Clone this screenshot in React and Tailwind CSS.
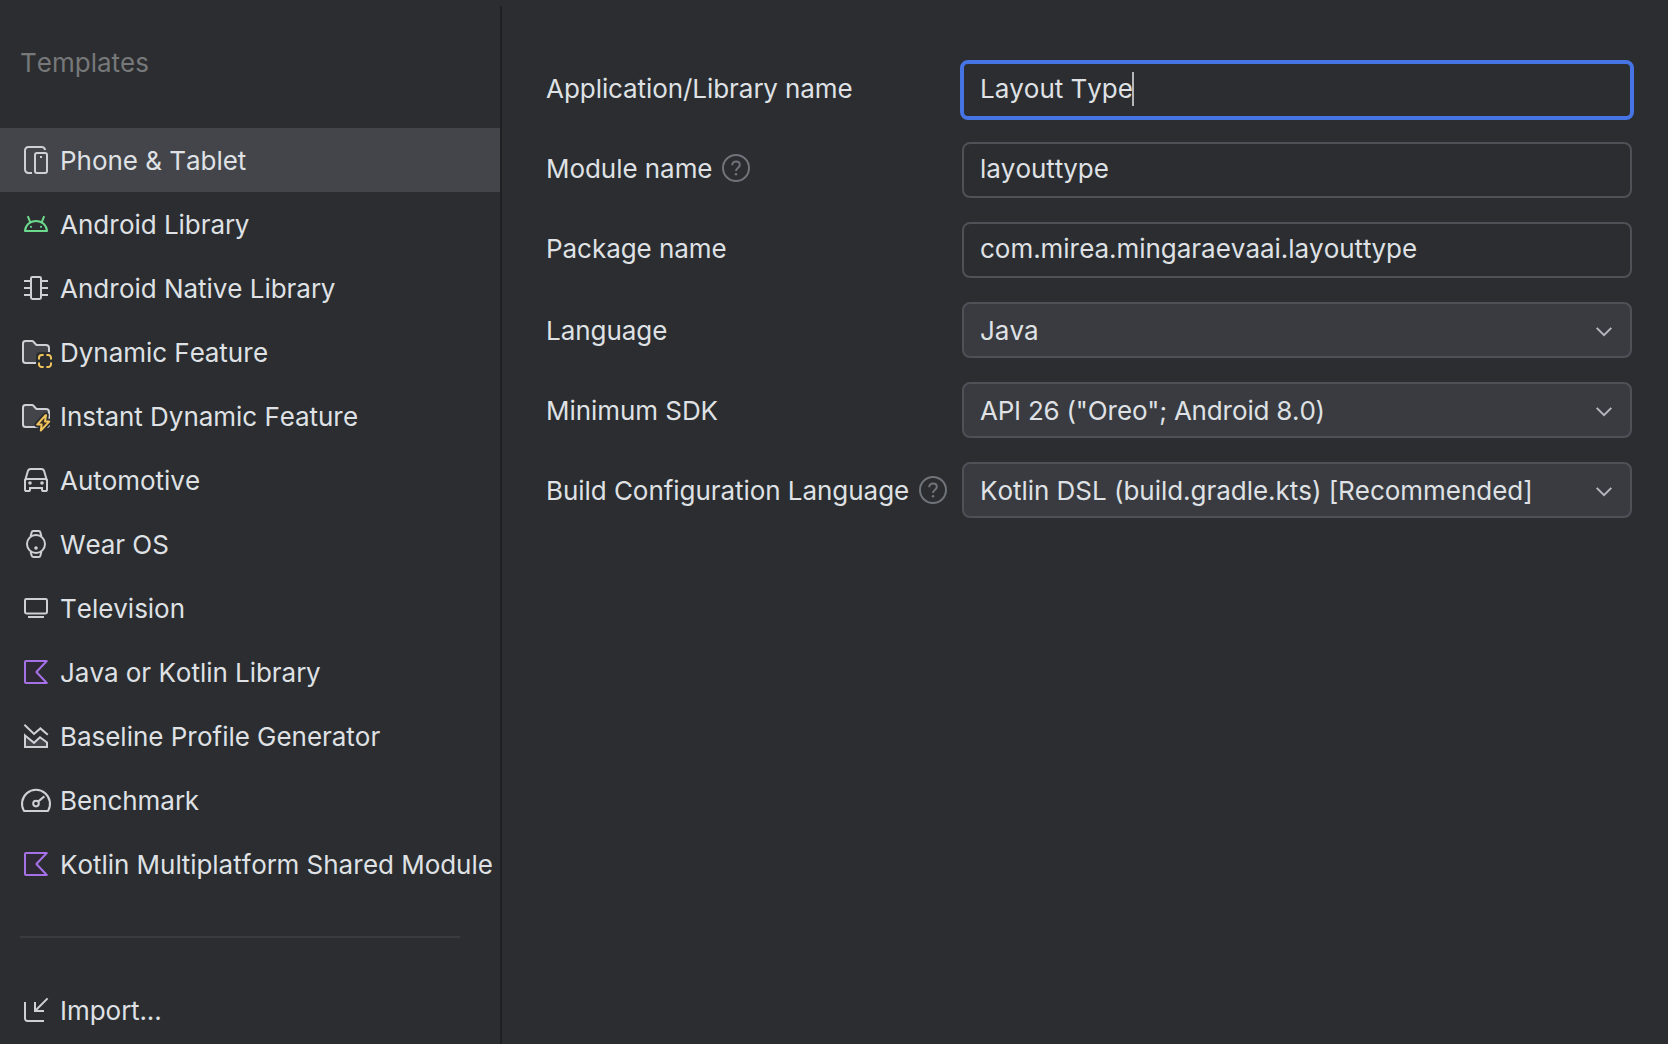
const S = { fill: "none", stroke: "#CED0D6", strokeWidth: 1 };

function Icon({ children }) {
  return (
    <svg viewBox="0 0 16 16" className="size-8 shrink-0 overflow-visible">
      {children}
    </svg>
  );
}

const FOLDER =
  "M8.106 4.346L8.253 4.5H13C13.828 4.5 14.5 5.172 14.5 6V12.133C14.5 12.953 13.932 13.5 13.367 13.5H2.633C2.068 13.5 1.5 12.953 1.5 12.133V3.867C1.5 3.047 2.068 2.5 2.633 2.5H6.122C6.258 2.5 6.388 2.556 6.483 2.654Z";
const BOLT = "M12.8 7.6L8.6 12.3H10.8L10.4 15.3L14.6 10.8H12.5L13 7.6Z";

const PhoneIcon = () => (
  <Icon>
    <path {...S} d="M6 14.5H4.2A1.7 1.7 0 0 1 2.5 12.8V3.2A1.7 1.7 0 0 1 4.2 1.5H10.8A1.9 1.9 0 0 1 12.6 3" />
    <rect {...S} x="7.5" y="4.5" width="6" height="10" rx="1" />
    <rect x="10" y="6" width="1" height="1" fill="#CED0D6" />
  </Icon>
);

const AndroidIcon = () => (
  <Icon>
    <g fill="none" stroke="#6CD98B">
      <path d="M2.5 11.5C2.7 8.6 5 6.5 8 6.5S13.3 8.6 13.5 11.5Z" strokeLinejoin="round" />
      <path d="M3.9 4.1L5.1 7.1M12.1 4.1L10.9 7.1" />
    </g>
    <circle cx="5.5" cy="9.4" r=".55" fill="#6CD98B" />
    <circle cx="10.5" cy="9.4" r=".55" fill="#6CD98B" />
  </Icon>
);

const ChipIcon = () => (
  <Icon>
    <rect {...S} x="5.5" y="2.5" width="5" height="11" rx=".7" />
    <path {...S} d="M2 4.5H5.5M2 8H5.5M2 11.5H5.5M10.5 4.5H14M10.5 8H14M10.5 11.5H14" />
  </Icon>
);

const DynamicIcon = () => (
  <Icon>
    <path d={FOLDER} fill="#43454A" stroke="#CED0D6" />
    <rect x="8" y="8" width="8.5" height="8.5" rx="2" fill="#2B2D30" />
    <path
      d="M9.5 11.8V10.9A1.4 1.4 0 0 1 10.9 9.5H11.8M13.2 9.5H14.1A1.4 1.4 0 0 1 15.5 10.9V11.8M15.5 13.2V14.1A1.4 1.4 0 0 1 14.1 15.5H13.2M11.8 15.5H10.9A1.4 1.4 0 0 1 9.5 14.1V13.2"
      fill="none"
      stroke="#F2C55C"
    />
  </Icon>
);

const InstantIcon = () => (
  <Icon>
    <path d={FOLDER} fill="#43454A" stroke="#CED0D6" />
    <path d={BOLT} fill="#2B2D30" stroke="#2B2D30" strokeWidth="2.8" strokeLinejoin="round" />
    <path d={BOLT} fill="#3D3223" stroke="#F2C55C" strokeLinejoin="round" />
  </Icon>
);

const CarIcon = () => (
  <Icon>
    <g {...S}>
      <path d="M2.5 8.5L3.9 3.6A1.5 1.5 0 0 1 5.3 2.5H10.7A1.5 1.5 0 0 1 12.1 3.6L13.5 8.5" />
      <path d="M3.3 7.5H12.7A.8 .8 0 0 1 13.5 8.3V12.7A.8 .8 0 0 1 12.7 13.5H11.8A.8 .8 0 0 1 11 12.7V12H5V12.7A.8 .8 0 0 1 4.2 13.5H3.3A.8 .8 0 0 1 2.5 12.7V8.3A.8 .8 0 0 1 3.3 7.5Z" />
    </g>
    <circle cx="5" cy="9.5" r=".9" fill="#CED0D6" />
    <circle cx="11" cy="9.5" r=".9" fill="#CED0D6" />
  </Icon>
);

const WatchIcon = () => (
  <Icon>
    <circle {...S} cx="8" cy="8" r="4.5" />
    <path {...S} d="M5.3 4.2L5.8 2.2A.9 .9 0 0 1 6.7 1.5H9.3A.9 .9 0 0 1 10.2 2.2L10.7 4.2M5.3 11.8L5.8 13.8A.9 .9 0 0 0 6.7 14.5H9.3A.9 .9 0 0 0 10.2 13.8L10.7 11.8" />
    <circle cx="8" cy="10" r=".9" fill="#CED0D6" />
  </Icon>
);

const TvIcon = () => (
  <Icon>
    <rect {...S} x="2.5" y="3.5" width="11" height="7.2" rx=".7" />
    <path {...S} d="M4 12.5H12" />
  </Icon>
);

const KotlinIcon = () => (
  <Icon>
    <path d="M2.5 3V13A.5 .5 0 0 0 3 13.5H13.4L8.2 8L13.4 2.5H3A.5 .5 0 0 0 2.5 3Z" fill="#2F2936" stroke="#A571E6" strokeLinejoin="round" />
  </Icon>
);

const ProfileIcon = () => (
  <Icon>
    <path d="M2.5 7.7L7 11.4L10 8.6L13.5 11.2V13.5H2.5Z" fill="#43454A" stroke="#CED0D6" />
    <path {...S} d="M2.2 2.4L7 7L10.2 4.2L13.9 7.4" />
  </Icon>
);

const GaugeIcon = () => (
  <Icon>
    <path {...S} d="M2 13.5A7 7 0 1 1 14 13.5Z" strokeLinejoin="round" />
    <circle {...S} cx="8" cy="9.8" r="1.4" />
    <path {...S} d="M9 8.8L12.2 6.2" />
  </Icon>
);

const ImportIcon = () => (
  <Icon>
    <path {...S} d="M2.5 4V12.3A1.2 1.2 0 0 0 3.7 13.5H12" />
    <path {...S} d="M7.5 4V8.5H12M7.5 8.5L13.8 2.2" />
  </Icon>
);

const ITEMS = [
  [PhoneIcon, "Phone & Tablet"],
  [AndroidIcon, "Android Library"],
  [ChipIcon, "Android Native Library"],
  [DynamicIcon, "Dynamic Feature"],
  [InstantIcon, "Instant Dynamic Feature"],
  [CarIcon, "Automotive"],
  [WatchIcon, "Wear OS"],
  [TvIcon, "Television"],
  [KotlinIcon, "Java or Kotlin Library"],
  [ProfileIcon, "Baseline Profile Generator"],
  [GaugeIcon, "Benchmark"],
  [KotlinIcon, "Kotlin Multiplatform Shared Module"],
];

const FIELDS = [
  { label: "Application/Library name", value: "Layout Type", kind: "focus" },
  { label: "Module name", value: "layouttype", kind: "input", help: true },
  { label: "Package name", value: "com.mirea.mingaraevaai.layouttype", kind: "input" },
  { label: "Language", value: "Java", kind: "select" },
  { label: "Minimum SDK", value: 'API 26 ("Oreo"; Android 8.0)', kind: "select", tracking: "tracking-[-0.22px]" },
  { label: "Build Configuration Language", value: "Kotlin DSL (build.gradle.kts) [Recommended]", kind: "select", help: true },
];

function Help() {
  return (
    <svg viewBox="0 0 28 28" className="ml-2.5 size-7 shrink-0" fill="none" stroke="#6F737A" strokeWidth="2">
      <circle cx="14" cy="14" r="13" />
      <path d="M10.2 11.2C10.2 8.9 11.8 7.6 14 7.6S17.8 9 17.8 11C17.8 13.6 14 13.8 14 17" />
      <circle cx="14" cy="20.2" r="1.3" fill="#6F737A" stroke="none" />
    </svg>
  );
}

function Field({ label, value, kind, help, tracking = "" }) {
  const select = kind === "select";
  const box = {
    focus: "-m-0.5 h-15 w-[674px] border-4 border-[#4674E5] rounded-[8px] pl-4",
    input: "h-14 w-[670px] border-2 border-[#4E5157] rounded-[8px] pl-4",
    select: "h-14 w-[670px] border-2 border-[#4E5157] bg-[#393B40] rounded-[8px] pl-4 pr-[18px]",
  }[kind];
  return (
    <div className="flex h-14 items-center">
      <div className="flex w-[416px] shrink-0 items-center tracking-[-0.05px]">
        <span className={select ? "pt-0.5" : "pb-0.5"}>{label}</span>
        {help && (
          <div className={select ? "" : "pb-1"}>
            <Help />
          </div>
        )}
      </div>
      <div className={`flex shrink-0 items-center justify-between ${box}`}>
        <div className={select ? "pt-0.5" : "flex items-center pb-0.5"}>
          <span className={tracking}>{value}</span>
          {kind === "focus" && <span className="-ml-px h-[34px] w-0.5 bg-[#B4B6BA]" />}
        </div>
        {select && (
          <svg viewBox="0 0 16 10" className="mt-1 h-2.5 w-4" fill="none" stroke="#B4B8BF" strokeWidth="2">
            <path d="M.7 .9L8 8.2L15.3 .9" />
          </svg>
        )}
      </div>
    </div>
  );
}

export default function App() {
  return (
    <div className="flex h-[1044px] w-[1668px] overflow-hidden whitespace-nowrap bg-[#2B2D30] font-[Inter,sans-serif] text-[26px] leading-8 tracking-[-0.03px] text-[#DFE1E5] [font-kerning:none]">
      <aside className="flex w-[500px] shrink-0 flex-col">
        <div className="flex h-32 items-center pb-0.5 pl-5 tracking-normal text-[#777879]">Templates</div>
        <nav>
          {ITEMS.map(([Glyph, name], i) => (
            <div key={name} className={`flex h-16 items-center gap-2 pl-5 ${i === 0 ? "bg-[#43454A]" : ""}`}>
              <Glyph />
              <span className="pt-0.5">{name}</span>
            </div>
          ))}
        </nav>
        <div className="mt-10 ml-5 h-0.5 w-[440px] bg-[#393B40]" />
        <div className="mt-10 flex h-16 items-center gap-2 pl-5">
          <ImportIcon />
          <span className="pt-0.5">Import...</span>
        </div>
      </aside>
      <div className="mt-1.5 w-0.5 shrink-0 bg-[#1E1F22]" />
      <main className="flex flex-col gap-6 pt-[62px] pl-11">
        {FIELDS.map((f) => (
          <Field key={f.label} {...f} />
        ))}
      </main>
    </div>
  );
}
